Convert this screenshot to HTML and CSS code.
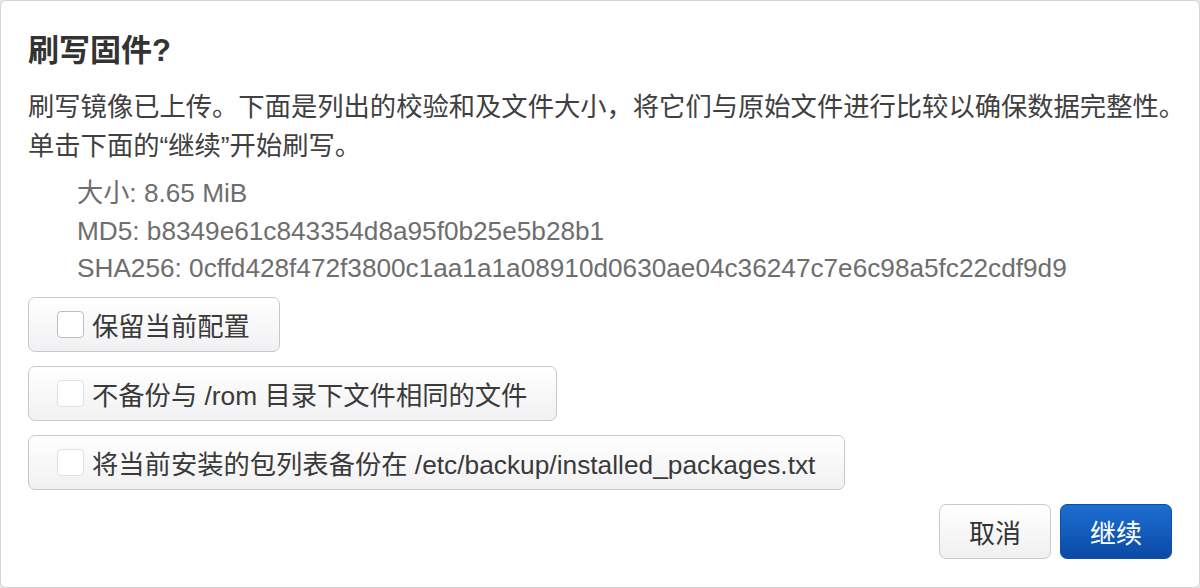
FILE: index.html
```html
<!DOCTYPE html>
<html lang="zh-CN">
<head>
<meta charset="utf-8">
<title>刷写固件?</title>
<link rel="stylesheet" href="styles.css">
</head>
<body>
<div class="dialog">
  <h2 class="title">刷写固件?</h2>
  <p class="desc">刷写镜像已上传。下面是列出的校验和及文件大小，将它们与原始文件进行比较以确保数据完整性。<br>单击下面的“继续”开始刷写。</p>
  <ul class="info">
    <li>大小: 8.65 MiB</li>
    <li>MD5: b8349e61c843354d8a95f0b25e5b28b1</li>
    <li>SHA256: 0cffd428f472f3800c1aa1a1a08910d0630ae04c36247c7e6c98a5fc22cdf9d9</li>
  </ul>
  <div class="options">
    <label class="opt"><span class="cb"></span>保留当前配置</label>
    <label class="opt"><span class="cb cb-dis"></span>不备份与 /rom 目录下文件相同的文件</label>
    <label class="opt"><span class="cb cb-dis"></span>将当前安装的包列表备份在 /etc/backup/installed_packages.txt</label>
  </div>
  <div class="actions">
    <button class="btn">取消</button>
    <button class="btn btn-primary">继续</button>
  </div>
</div>
</body>
</html>
```
FILE: styles.css
```css
html, body {
  margin: 0;
  padding: 0;
  background: #e6e6e6;
}
body {
  width: 1200px;
  height: 588px;
  overflow: hidden;
  font-family: "Liberation Sans", "Noto Sans CJK SC", sans-serif;
}
.dialog {
  box-sizing: border-box;
  width: 1200px;
  height: 588px;
  background: #fff;
  border: 1px solid #d4d4d4;
  border-radius: 6px;
  padding: 0 27px 0 27px;
  display: flex;
  flex-direction: column;
}
.title {
  margin: 31px 0 0 0;
  font-size: 31px;
  line-height: 38px;
  font-weight: bold;
  color: #333;
}
.desc {
  margin: 18px 0 0 0;
  font-size: 26.3px;
  line-height: 39px;
  color: #404040;
  white-space: nowrap;
}
.info {
  list-style: none;
  margin: 9px 0 0 0;
  padding: 0 0 0 49px;
  font-size: 26.2px;
  line-height: 37.5px;
  color: #6e6e6e;
}
.options {
  margin-top: 9px;
  display: flex;
  flex-direction: column;
  align-items: flex-start;
  gap: 14px;
}
.opt {
  box-sizing: border-box;
  height: 55px;
  display: flex;
  align-items: center;
  padding: 0 29px 0 28px;
  border: 1px solid #c8c8c8;
  border-radius: 7px;
  background: linear-gradient(#ffffff, #f1f1f3);
  font-size: 26.3px;
  color: #3a3a3a;
  white-space: nowrap;
}
.cb {
  box-sizing: border-box;
  width: 27px;
  height: 27px;
  border: 1px solid #bdbdbd;
  border-radius: 4px;
  background: #fff;
  margin-right: 8px;
  flex: none;
}
.cb-dis {
  border-color: #e0e0e0;
}
.actions {
  margin-top: 14px;
  display: flex;
  justify-content: flex-end;
  gap: 9px;
}
.btn {
  box-sizing: border-box;
  width: 112px;
  height: 55px;
  border: 1px solid #c9c9c9;
  border-radius: 7px;
  background: linear-gradient(#ffffff, #f0f0f2);
  font-family: "Liberation Sans", "Noto Sans CJK SC", sans-serif;
  font-size: 26px;
  color: #333;
  padding: 0;
}
.btn-primary {
  border-color: #0d4fa8;
  background: linear-gradient(#1c6ed1, #0b4aa6);
  color: #fff;
}
```
